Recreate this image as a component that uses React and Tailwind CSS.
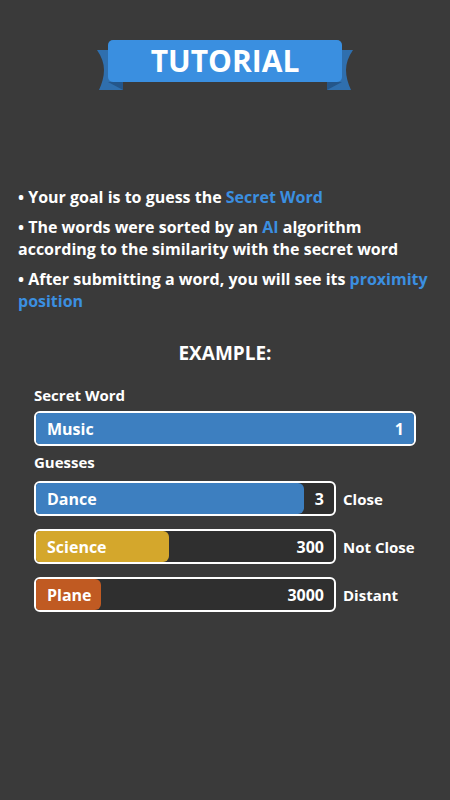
import React from 'react';

const guesses = [
  { word: 'Dance', rank: 3, fill: 'bg-[#3d7fc0]', pct: 268, label: 'Close' },
  { word: 'Science', rank: 300, fill: 'bg-[#d4a72c]', pct: 133, label: 'Not Close' },
  { word: 'Plane', rank: 3000, fill: 'bg-[#c05a22]', pct: 65, label: 'Distant' },
];

function Tail({ flip }) {
  return (
    <svg
      width="30"
      height="42"
      viewBox="0 0 30 42"
      className={`absolute top-[9px] ${flip ? 'right-[-13px] -scale-x-100' : 'left-[-13px]'}`}
    >
      <path d="M2 1 H28 V41 H4 Q9 30 9 21 Q9 11 2 1 Z" fill="#2f6fae" />
      <path d="M13 33 H28 V41 Z" fill="#24568a" />
    </svg>
  );
}

function Bar({ word, rank, fill, width, full }) {
  return (
    <div className="relative h-[35px] rounded-[6px] border-2 border-white bg-[#2f2f2f] overflow-hidden">
      <div
        className={`absolute inset-y-0 left-0 ${fill} ${full ? 'right-0' : 'rounded-r-[6px]'}`}
        style={full ? undefined : { width }}
      />
      <div className="relative flex h-full items-center justify-between pl-[11px] pr-[10px] text-[16px] leading-[20px] font-bold text-white">
        <span>{word}</span>
        <span>{rank}</span>
      </div>
    </div>
  );
}

export default function App() {
  return (
    <div
      className="min-h-[800px] w-[450px] bg-[#3a3a3a] text-white"
      style={{ fontFamily: '"Open Sans", "Noto Sans", sans-serif' }}
    >
      <div className="flex justify-center pt-[40px]">
        <div className="relative">
          <Tail />
          <Tail flip />
          <div className="relative flex h-[42px] w-[234px] items-center justify-center rounded-[5px] bg-[#3a8fe0] text-[30px] leading-[34px] font-bold text-white">
            TUTORIAL
          </div>
        </div>
      </div>

      <div className="mt-[104px] flex flex-col gap-[8px] px-[18px] text-[16px] font-bold leading-[22px]">
        <p>• Your goal is to guess the <span className="text-[#3b8fe0]">Secret Word</span></p>
        <p>
          • The words were sorted by an <span className="text-[#3b8fe0]">AI</span> algorithm
          <br />
          according to the similarity with the secret word
        </p>
        <p>
          • After submitting a word, you will see its{' '}
          <span className="text-[#3b8fe0]">proximity position</span>
        </p>
      </div>

      <p className="mt-[29px] text-center text-[19px] leading-[24px] font-bold">EXAMPLE:</p>

      <div className="mt-[20px] px-[34px]">
        <p className="mb-[6px] text-[15px] leading-[20px] font-bold">Secret Word</p>
        <div className="w-[382px]">
          <Bar word="Music" rank={1} fill="bg-[#3d7fc0]" full />
        </div>
        <p className="mb-[9px] mt-[6px] text-[15px] leading-[20px] font-bold">Guesses</p>
        <div className="flex flex-col gap-[13px]">
          {guesses.map((g) => (
            <div key={g.word} className="flex items-center gap-[7px]">
              <div className="w-[302px]">
                <Bar word={g.word} rank={g.rank} fill={g.fill} width={g.pct} />
              </div>
              <span className="text-[15px] leading-[20px] font-bold">{g.label}</span>
            </div>
          ))}
        </div>
      </div>
    </div>
  );
}
